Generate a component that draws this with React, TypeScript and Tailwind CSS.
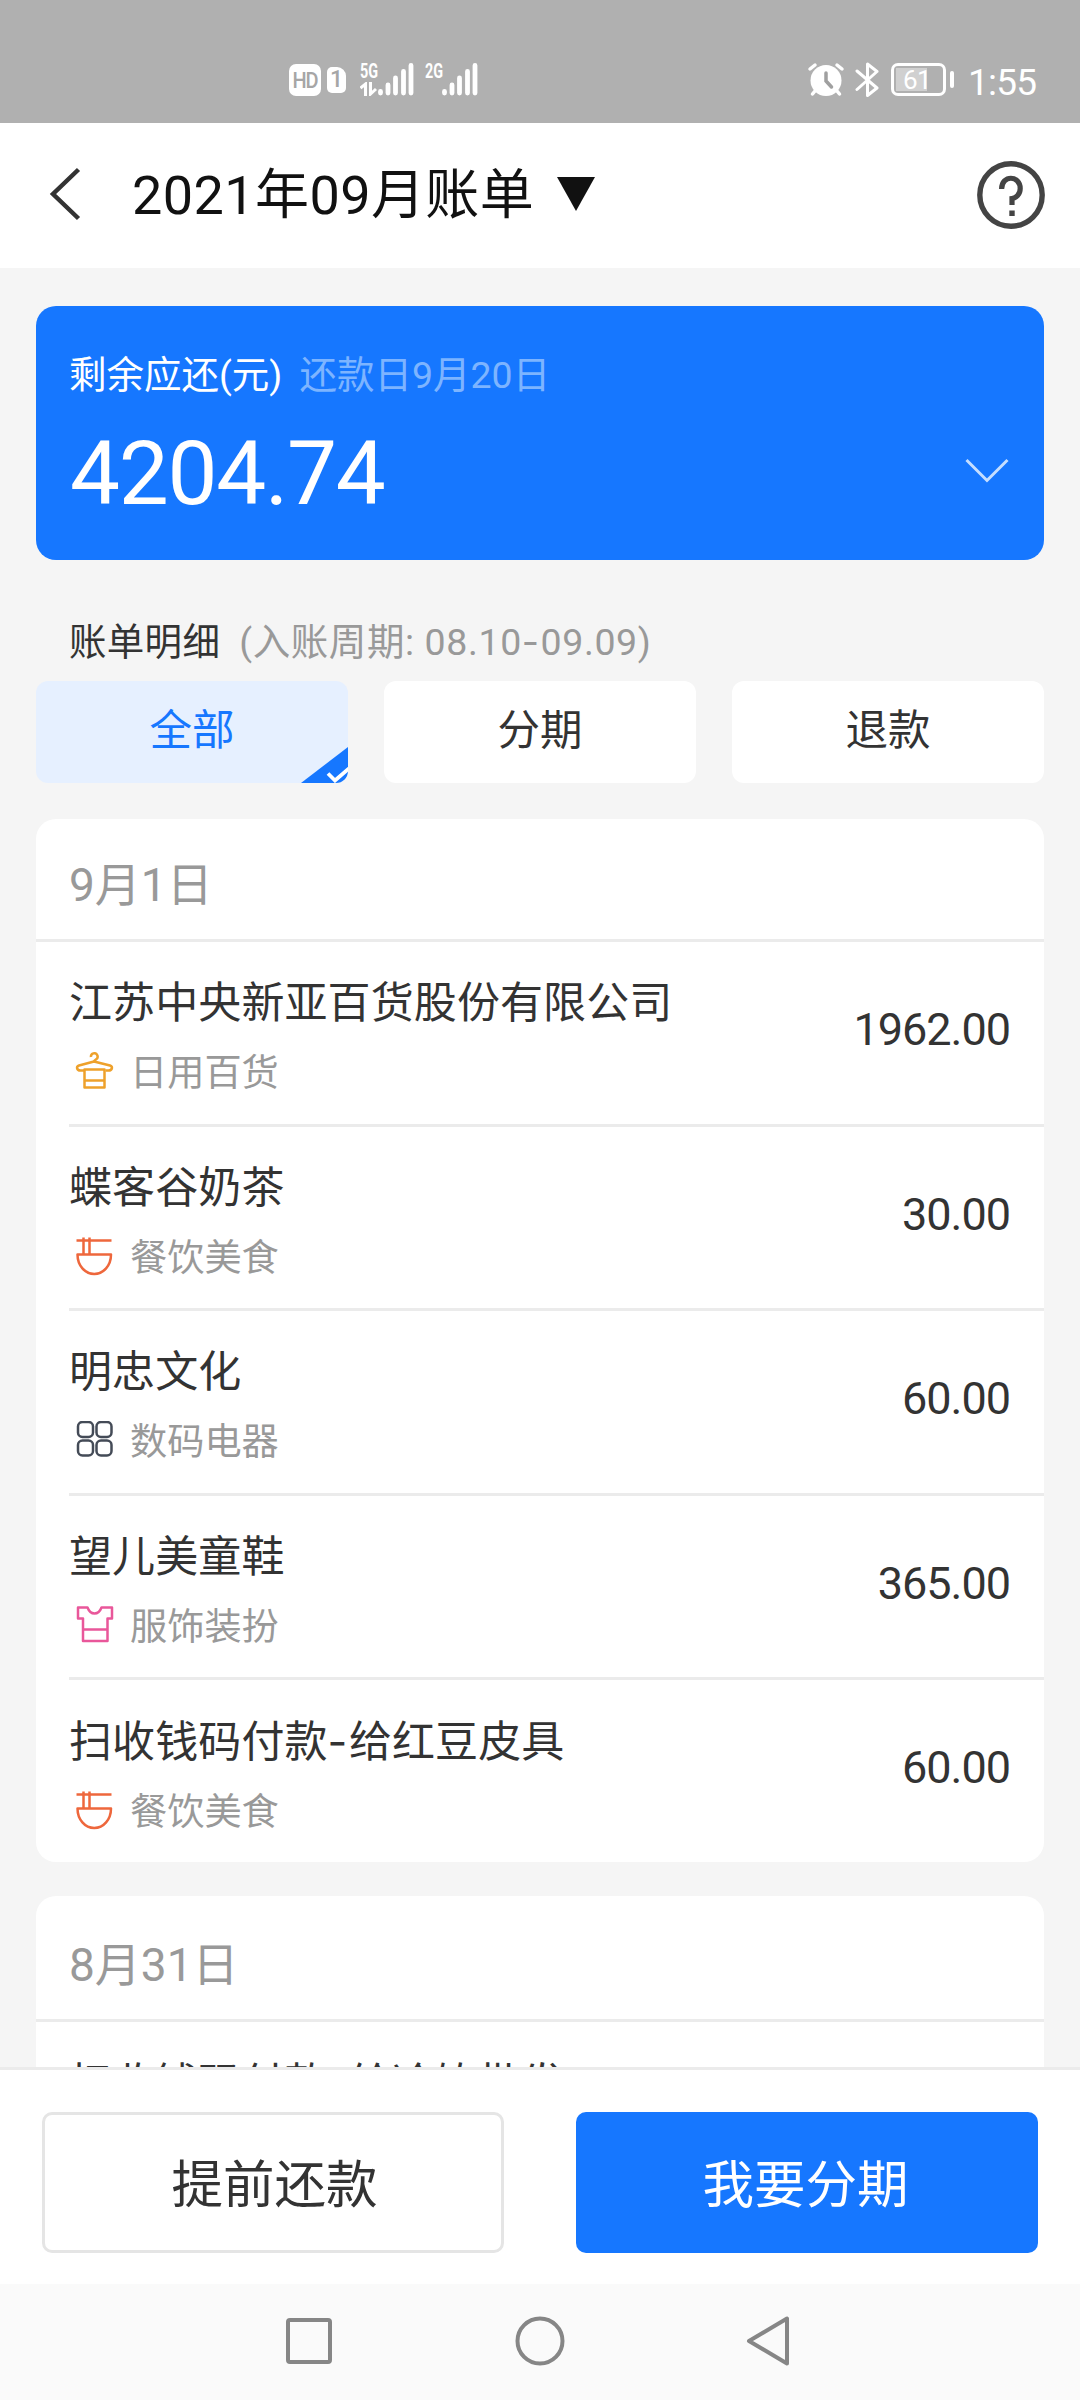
import type { ReactNode } from 'react'

type Category = 'daily' | 'food' | 'digital' | 'clothes'

interface BillItem {
  title: string
  category: Category
  amount?: string
}

interface BillGroup {
  date: string
  headClass: string
  items: BillItem[]
}

const CATEGORY_LABEL: Record<Category, string> = {
  daily: '日用百货',
  food: '餐饮美食',
  digital: '数码电器',
  clothes: '服饰装扮',
}

const groups: BillGroup[] = [
  {
    date: '9月1日',
    headClass: 'h-[123px] pt-[41px]',
    items: [
      { title: '江苏中央新亚百货股份有限公司', category: 'daily', amount: '1962.00' },
      { title: '蝶客谷奶茶', category: 'food', amount: '30.00' },
      { title: '明忠文化', category: 'digital', amount: '60.00' },
      { title: '望儿美童鞋', category: 'clothes', amount: '365.00' },
      { title: '扫收钱码付款-给红豆皮具', category: 'food', amount: '60.00' },
    ],
  },
  {
    date: '8月31日',
    headClass: 'h-[126px] pt-[44px]',
    items: [{ title: '扫收钱码付款-给冷饮批发', category: 'food' }],
  },
]

const tabs = ['全部', '分期', '退款']

function WideHyphen({ text }: { text: string }) {
  const [head, tail] = text.split('-')
  if (tail === undefined) return <>{head}</>
  return (
    <>
      {head}
      <span className="font-['Inter',sans-serif] tracking-[1.5px]">-</span>
      {tail}
    </>
  )
}

function CategoryIcon({ category }: { category: Category }) {
  const paths: Record<Category, ReactNode> = {
    daily: (
      <g stroke="#eea12b">
        <path d="M16 5a3.300 3.300 0 1 1 5 2.400c-1.600.8-2 1.500-2 3.100" />
        <path d="M9 18.500H5.500C1.500 18.500 1 14.500 4 13.500L19 9.500 35 13.500C38 14.500 37.500 18.500 33.500 18.500H30.500" />
        <path d="M9.500 17.500H29.500V35.500H9.500ZM9.500 28.500H29.500" />
      </g>
    ),
    food: (
      <g stroke="#ee673c">
        <path d="M1.500 3.500H36.500M2.500 17.500H36C36 28.500 28.500 37 19.250 37S2.500 28.500 2.500 17.500ZM8.500.5V17M14.500.5V17" />
      </g>
    ),
    digital: (
      <g stroke="#444b57">
        <rect x="3" y="1" width="15" height="15" rx="4.500" />
        <rect x="21.500" y="1" width="15" height="15" rx="4.500" />
        <rect x="3" y="19.500" width="15" height="15" rx="4.500" />
        <rect x="21.500" y="19.500" width="15" height="15" rx="4.500" />
      </g>
    ),
    clothes: (
      <g stroke="#e9579a">
        <path d="M3 1.500H12.500C14 5.500 16.500 7.500 19.500 7.500S25 5.500 26.500 1.500H37V12.500H32.500V35H8V12.500H3ZM8 23.500H32.500" />
      </g>
    ),
  }

  return (
    <svg width="40" height="40" viewBox="0 0 40 40" fill="none" strokeWidth="2.5" strokeLinejoin="round" className="shrink-0">
      {paths[category]}
    </svg>
  )
}

function SignalBars() {
  return (
    <svg width="36" height="34" viewBox="0 0 36 34" fill="none" stroke="#fff" strokeWidth="4.800" strokeLinecap="round">
      <path d="M2.500 29.500V31M10 23V31M17.500 16V31M25.500 9.500V31M33 3.500V31" />
    </svg>
  )
}

function StatusBar() {
  return (
    <div className="flex h-[123px] shrink-0 items-start bg-[#b0b0b0] pt-[62px] text-white">
      <div className="ml-[289px] mt-[2px] flex h-8 w-8 items-center justify-center rounded-[7px] bg-white text-[20px] font-medium tracking-[-1px] text-[#a6a6a6]">
        <span className="scale-y-[1.1]">HD</span>
      </div>
      <div className="ml-[6px] mt-[5px] flex h-[26px] w-[19px] items-center justify-center rounded-[5px] rounded-tr-[9px] bg-white text-[23px] font-medium text-[#a6a6a6]">
        1
      </div>
      <div className="ml-[14px] flex w-[18px] flex-col">
        <span className="h-[20px] w-[24px] origin-left scale-x-[0.72] text-[20px] font-bold leading-[19px]">5G</span>
        <svg width="17" height="14" viewBox="0 0 17 14" fill="none" stroke="#fff" strokeWidth="3">
          <path d="M.5 6 5.500 2V14M10.500 0V12L16 7" />
        </svg>
      </div>
      <SignalBars />
      <div className="ml-[11px] w-[17px]">
        <span className="block h-[20px] w-[24px] origin-left scale-x-[0.72] text-[20px] font-bold leading-[19px]">2G</span>
      </div>
      <SignalBars />
      <svg width="38" height="36" viewBox="0 0 38 36" className="ml-[329px] shrink-0" fill="none" strokeLinecap="round">
        <circle cx="19" cy="18.500" r="15.500" fill="#fff" />
        <path d="M3 7 8 3M35 7 30 3M8 29 5.500 32M30 29 32.500 32" stroke="#fff" strokeWidth="3.500" />
        <path d="M19 11V19L24.500 25" stroke="#a0a0a0" strokeWidth="3.500" />
      </svg>
      <svg width="24" height="36" viewBox="0 0 24 36" className="ml-[10px] shrink-0" fill="none" stroke="#fff" strokeWidth="3" strokeLinejoin="round" strokeLinecap="round">
        <path d="M2 9 22 26 12.500 33.500V2L22 9.500 2 27.500" />
      </svg>
      <div className="ml-[12px] mt-[1px] flex h-[33px] w-[55px] shrink-0 rounded-[7px] border-[3px] border-white p-[2px]">
        <div className="flex h-full w-[31px] items-center overflow-visible bg-[#d0d0d0] pl-[7px] text-[26px] leading-none tracking-[-0.5px]">
          61
        </div>
      </div>
      <div className="ml-1 mt-[9px] h-[17px] w-1 shrink-0 rounded-[2px] bg-white" />
      <span className="ml-[14px] text-[37px] leading-[42px] tracking-[-0.8px]">1:55</span>
    </div>
  )
}

function Header() {
  return (
    <header className="flex h-[145px] shrink-0 items-center bg-white text-[#111]">
      <svg width="32" height="54" viewBox="0 0 32 54" fill="none" stroke="#333" strokeWidth="4.5" className="-mt-[3px] ml-[49px]">
        <path d="M29.500 2.500 4 27 29.500 51.500" />
      </svg>
      <h1 className="ml-[51px] text-[54px] leading-[72px] tracking-[0.4px]">2021年09月账单</h1>
      <svg width="38" height="34" viewBox="0 0 38 34" className="-mt-1 ml-[23px]">
        <path d="M0 0H38L19 34Z" fill="#111" />
      </svg>
      <svg width="68" height="68" viewBox="0 0 68 68" fill="none" stroke="#444" className="-mt-[1px] ml-auto mr-[35px]">
        <circle cx="34" cy="34" r="31.200" strokeWidth="5.4" />
        <path d="M24.600 28C24.600 13.500 43.200 14 43.200 27.500C43.200 33.500 39 37 35 37.500V44" strokeWidth="5.2" />
        <path d="M35 49.500V55" strokeWidth="5.4" />
      </svg>
    </header>
  )
}

function SummaryCard() {
  return (
    <section className="flex h-[254px] shrink-0 justify-between rounded-[20px] bg-[#1677ff] pl-[33px] pr-[35px] text-white">
      <div>
        <div className="mt-[44px] flex text-[37.500px] leading-[50px]">
          <span>剩余应还(元)</span>
          <span className="ml-[17px] text-[#7db4ff]">还款日9月20日</span>
        </div>
        <p className="ml-[1px] mt-[24px] text-[89px] leading-[100px] tracking-[-1.3px]">4204.74</p>
      </div>
      <svg width="44" height="26" viewBox="0 0 44 26" fill="none" stroke="#c5deff" strokeWidth="3" className="mt-[152px]">
        <path d="M1.500 2 22 22.500 42.500 2" />
      </svg>
    </section>
  )
}

function Tabs() {
  return (
    <div className="grid shrink-0 grid-cols-3 gap-9">
      {tabs.map((tab, i) => (
        <button
          key={tab}
          className={
            i === 0
              ? 'relative h-[102px] overflow-hidden rounded-[12px] bg-[#e6f0ff] pb-[2px] text-[42.500px] text-[#1677ff]'
              : 'relative h-[102px] overflow-hidden rounded-[12px] bg-white pb-[2px] text-[42.500px] text-[#333]'
          }
        >
          {tab}
          {i === 0 && (
            <svg width="47" height="36" viewBox="0 0 47 36" fill="none" className="absolute bottom-0 right-0">
              <path d="M0 36 47 0V36Z" fill="#1677ff" />
              <path d="M27 26.500 34 33.500 48 21.500" stroke="#fff" strokeWidth="3.800" />
            </svg>
          )}
        </button>
      ))}
    </div>
  )
}

function BillRow({ item, first }: { item: BillItem; first: boolean }) {
  return (
    <li className="ml-[33px] h-[184.500px]">
      <div className={first ? 'h-[3px]' : 'h-[3px] bg-[#ebebeb]'} />
      <div className="flex justify-between pr-[34px]">
        <div>
          <p className="mt-[36px] text-[43px] leading-[50px] tracking-[0.1px] text-[#333]">
            <WideHyphen text={item.title} />
          </p>
          <div className="mt-[20px] flex h-[50px] items-start pl-[6px] pt-[4px]">
            <CategoryIcon category={item.category} />
            <span className="-mt-1 ml-[15px] text-[37.200px] leading-[50px] text-[#999]">{CATEGORY_LABEL[item.category]}</span>
          </div>
        </div>
        {item.amount && (
          <span className="mt-[63px] text-[45px] leading-[50px] tracking-[-1px] text-[#333]">{item.amount}</span>
        )}
      </div>
    </li>
  )
}

function BillCard({ group }: { group: BillGroup }) {
  return (
    <section className="shrink-0 overflow-hidden rounded-[20px] bg-white">
      <div className={`${group.headClass} border-b-[3px] border-[#ebebeb] pl-[33px] text-[46px] leading-[50px] text-[#999]`}>
        {group.date}
      </div>
      <ul className="-mt-[3px]">
        {group.items.map((item, i) => (
          <BillRow key={item.title} item={item} first={i === 0} />
        ))}
      </ul>
    </section>
  )
}

export default function App() {
  return (
    <div className="flex h-[2400px] w-[1080px] flex-col overflow-hidden bg-[#f5f5f5] font-['Roboto','Noto_Sans_CJK_SC',sans-serif]">
      <StatusBar />
      <Header />

      <main className="flex h-[1799px] shrink-0 flex-col overflow-hidden px-9 pt-[38px]">
        <SummaryCard />
        <div className="mb-[14px] mt-[57px] flex h-[50px] shrink-0 pl-[33px] text-[37.500px] leading-[50px]">
          <h2 className="tracking-[0.3px] text-[#333]">账单明细</h2>
          <span className="ml-[19px] tracking-[0.6px] text-[#999]">
            <WideHyphen text="(入账周期: 08.10-09.09)" />
          </span>
        </div>
        <Tabs />
        <div className="mt-9 flex shrink-0 flex-col gap-[34px]">
          {groups.map((group) => (
            <BillCard key={group.date} group={group} />
          ))}
        </div>
      </main>

      <footer className="grid h-[217px] shrink-0 grid-cols-2 items-start gap-[72px] border-t-[3px] border-[#ebebeb] bg-white px-[42px] pt-[42px] text-[51.500px]">
        <button className="h-[141px] rounded-[10px] border-[3px] border-[#e5e5e5] pl-[3px] pt-[6px] text-[#333]">提前还款</button>
        <button className="h-[141px] rounded-[10px] bg-[#1677ff] pr-[3px] pt-[6px] text-white">我要分期</button>
      </footer>

      <nav className="flex h-[116px] shrink-0 items-start bg-[#fafafa] pt-[31px]">
        <svg width="52" height="52" viewBox="0 0 52 52" fill="none" stroke="#868686" strokeWidth="4" className="ml-[283px]">
          <rect x="5" y="5" width="42" height="42" rx="2" />
        </svg>
        <svg width="52" height="52" viewBox="0 0 52 52" fill="none" stroke="#868686" strokeWidth="4" className="ml-[179px]">
          <circle cx="26" cy="26" r="22.500" />
        </svg>
        <svg width="52" height="52" viewBox="0 0 52 52" fill="none" stroke="#868686" strokeWidth="4" strokeLinejoin="round" className="ml-[178px]">
          <path d="M43 3.500V48.500L5 26Z" />
        </svg>
      </nav>
    </div>
  )
}
